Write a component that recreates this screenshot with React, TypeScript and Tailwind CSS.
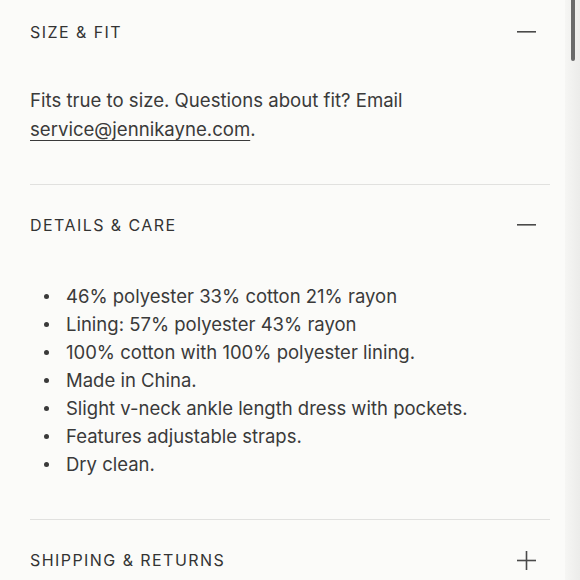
import React from "react";

const Minus = () => (
  <svg width="19" height="2" viewBox="0 0 19 2" className="block">
    <rect x="0" y="0" width="19" height="1.6" fill="#4a4a4a" />
  </svg>
);

const Plus = () => (
  <svg width="19" height="19" viewBox="0 0 19 19" className="block">
    <rect x="0" y="8.7" width="19" height="1.6" fill="#4a4a4a" />
    <rect x="8.7" y="0" width="1.6" height="19" fill="#4a4a4a" />
  </svg>
);

const items = [
  "46% polyester 33% cotton 21% rayon",
  "Lining: 57% polyester 43% rayon",
  "100% cotton with 100% polyester lining.",
  "Made in China.",
  "Slight v-neck ankle length dress with pockets.",
  "Features adjustable straps.",
  "Dry clean.",
];

export default function App() {
  return (
    <div
      className="relative w-[580px] h-[580px] overflow-hidden bg-[#fbfbf9] text-[#363636]"
      style={{ fontFamily: "Inter, 'Noto Sans', sans-serif" }}
    >
      <div className="pl-[30px] pr-[30px] w-[580px]">
        <div className="h-[64px] flex items-center justify-between">
          <span className="text-[16px] tracking-[0.09em] text-[#333]">SIZE &amp; FIT</span>
          <span className="mr-[14px]"><Minus /></span>
        </div>
        <div className="pt-[22px] pb-[40px] text-[18.6px] leading-[29px] text-[#3a3a3a]">
          Fits true to size. Questions about fit? Email
          <br />
          <span className="underline underline-offset-[4px] decoration-[1px]">service@jennikayne.com</span>.
        </div>
        <div className="border-t border-[#e1e1df]">
          <div className="h-[80px] flex items-center justify-between">
            <span className="text-[16px] tracking-[0.09em] text-[#333]">DETAILS &amp; CARE</span>
            <span className="mr-[14px]"><Minus /></span>
          </div>
          <ul className="pt-[17px] pb-[41px] text-[18.5px] leading-[28px] text-[#3a3a3a]">
            {items.map((t) => (
              <li key={t} className="flex items-center">
                <span className="w-[5px] h-[5px] rounded-full bg-[#3a3a3a] ml-[14px] mr-[17px]" />
                <span>{t}</span>
              </li>
            ))}
          </ul>
        </div>
        <div className="border-t border-[#e1e1df]">
          <div className="h-[80px] flex items-center justify-between">
            <span className="text-[16px] tracking-[0.09em] text-[#333]">SHIPPING &amp; RETURNS</span>
            <span className="mr-[14px]"><Plus /></span>
          </div>
        </div>
      </div>
      <div className="absolute top-0 right-0 w-[15px] h-[580px] bg-gradient-to-r from-[#f6f6f4] to-[#ececea]">
        <div className="absolute top-0 left-[6px] w-[4px] h-[61px] rounded-b-full bg-[#6a6a6a]" />
      </div>
    </div>
  );
}
